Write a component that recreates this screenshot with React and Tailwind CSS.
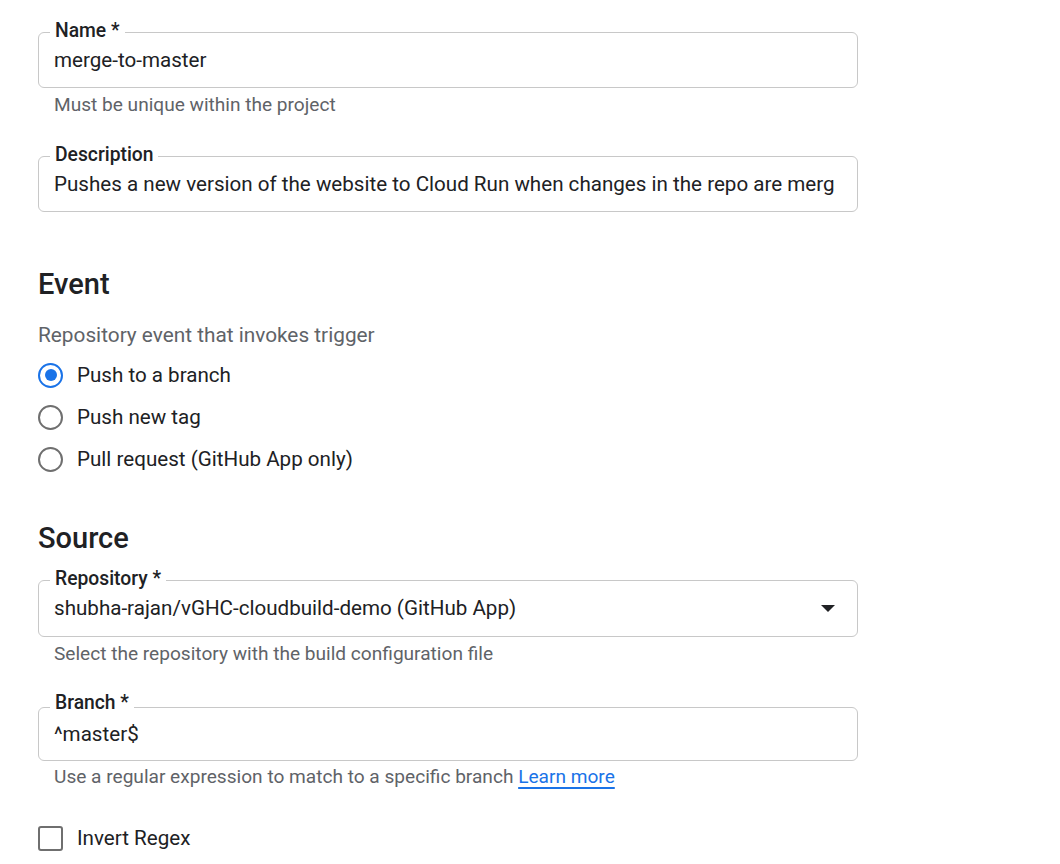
import { useState } from "react";

function OutlinedField({ label, value, height = "h-[56px]", labelTop = "top-[-2px]", select = false }) {
  return (
    <div className={`relative w-[820px] ${height} rounded-[6px] border border-[#c8c8c8] flex items-center pl-[15px] pr-[22px]`}>
      <span className={`absolute left-[11px] ${labelTop} -translate-y-1/2 bg-white px-[5px] text-[19.3px] leading-none font-medium text-[#202124]`}>
        {label}
      </span>
      <div className="flex-1 overflow-hidden whitespace-nowrap text-[20.6px] text-[#202124]">{value}</div>
      {select && (
        <svg width="14" height="8" viewBox="0 0 14 8" className="shrink-0 ml-2">
          <path d="M0 0 L14 0 L7 7 Z" fill="#202124" />
        </svg>
      )}
    </div>
  );
}

function Radio({ checked, label, onClick }) {
  return (
    <button type="button" onClick={onClick} className="h-[42px] flex items-center gap-[14px] text-left">
      <span
        className={`size-[25px] rounded-full border-2 flex items-center justify-center ${
          checked ? "border-[#1a73e8]" : "border-[#6f6f6f]"
        }`}
      >
        {checked && <span className="size-[12px] rounded-full bg-[#1a73e8]" />}
      </span>
      <span className="text-[20.6px] text-[#202124]">{label}</span>
    </button>
  );
}

export default function App() {
  const [event, setEvent] = useState("push");
  const [invert, setInvert] = useState(false);

  return (
    <div className="min-h-[864px] bg-white pl-[38px] pt-[32px] font-['Roboto','Liberation_Sans',sans-serif]">
      {/* NAME */}
      <OutlinedField label="Name *" value="merge-to-master" />
      <p className="mt-[7px] pl-[16px] text-[19.1px] leading-[20px] text-[#5f6368]">Must be unique within the project</p>

      {/* DESCRIPTION */}
      <div className="mt-[41px]">
        <OutlinedField
          label="Description"
          value="Pushes a new version of the website to Cloud Run when changes in the repo are merged to master"
        />
      </div>

      {/* EVENT */}
      <h2 className="mt-[56px] text-[29px] leading-[32px] font-medium text-[#202124]">Event</h2>
      <p className="mt-[23px] text-[20.8px] leading-[24px] text-[#5f6368]">Repository event that invokes trigger</p>
      <div className="mt-[7px] flex flex-col items-start">
        <Radio checked={event === "push"} label="Push to a branch" onClick={() => setEvent("push")} />
        <Radio checked={event === "tag"} label="Push new tag" onClick={() => setEvent("tag")} />
        <Radio checked={event === "pr"} label="Pull request (GitHub App only)" onClick={() => setEvent("pr")} />
      </div>

      {/* SOURCE */}
      <h2 className="mt-[42px] text-[29px] leading-[32px] font-medium text-[#202124]">Source</h2>
      <div className="mt-[26px]">
        <OutlinedField
          label="Repository *"
          value="shubha-rajan/vGHC-cloudbuild-demo (GitHub App)"
          height="h-[57px]"
          select
        />
      </div>
      <p className="mt-[7px] pl-[16px] text-[19.1px] leading-[20px] text-[#5f6368]">
        Select the repository with the build configuration file
      </p>

      <div className="mt-[43px]">
        <OutlinedField label="Branch *" value="^master$" height="h-[54px]" labelTop="top-[-5px]" />
      </div>
      <p className="mt-[6px] pl-[16px] text-[19.1px] leading-[20px] text-[#5f6368]">
        Use a regular expression to match to a specific branch{" "}
        <a href="#" className="text-[#1a73e8] underline decoration-[1.5px] underline-offset-[4px]">Learn more</a>
      </p>

      <button
        type="button"
        onClick={() => setInvert(!invert)}
        className="mt-[38px] h-[26px] flex items-center gap-[14px]"
      >
        <span className="size-[25px] rounded-[3px] border-2 border-[#6f6f6f]" />
        <span className="text-[20.6px] text-[#202124]">Invert Regex</span>
      </button>
    </div>
  );
}
